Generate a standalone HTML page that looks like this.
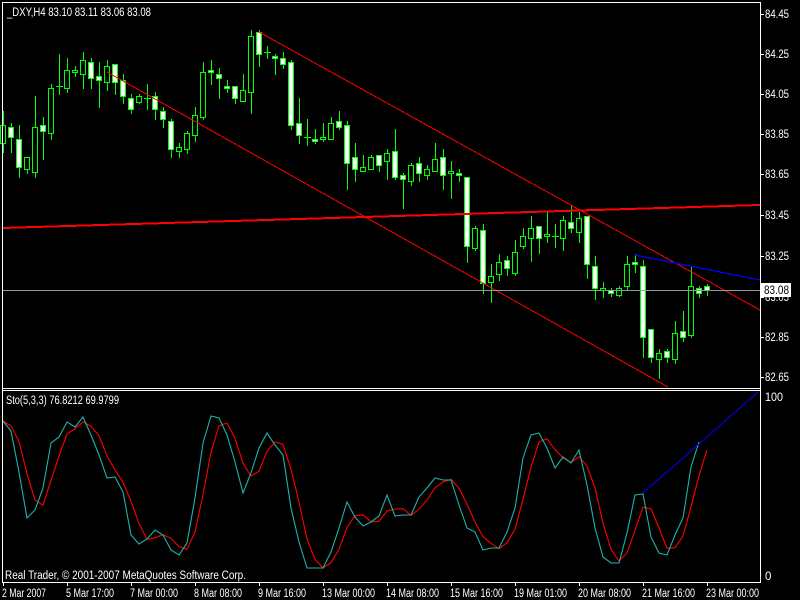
<!DOCTYPE html>
<html><head><meta charset="utf-8"><style>
html,body{margin:0;padding:0;background:#000;width:800px;height:600px;overflow:hidden}
svg{display:block}
text{font-family:"Liberation Sans",sans-serif;font-size:11.5px;fill:#fff}
</style></head><body>
<svg id="s" width="800" height="600" viewBox="0 0 800 600" xmlns="http://www.w3.org/2000/svg" shape-rendering="crispEdges">
<rect width="800" height="600" fill="#000"/>
<g id="c"></g>
<line x1="259" y1="32" x2="760" y2="310" stroke="#f00" stroke-width="1"/>
<line x1="107" y1="72" x2="668" y2="387" stroke="#f00" stroke-width="1"/>
<line x1="2" y1="228" x2="760" y2="205" stroke="#f00" stroke-width="2"/>
<line x1="635" y1="255" x2="760" y2="280" stroke="#00f" stroke-width="1.3"/>
<line x1="2" y1="290.5" x2="760" y2="290.5" stroke="#8c9aa8" stroke-width="1"/>
<line x1="2.5" y1="2" x2="2.5" y2="583" stroke="#fff"/>
<line x1="2" y1="2.5" x2="761" y2="2.5" stroke="#fff"/>
<line x1="760.5" y1="2" x2="760.5" y2="583" stroke="#fff"/>
<line x1="2" y1="388.5" x2="761" y2="388.5" stroke="#fff"/>
<line x1="2" y1="390.5" x2="761" y2="390.5" stroke="#fff"/>
<line x1="2" y1="582.5" x2="761" y2="582.5" stroke="#fff"/>
<g id="ax"></g>
<rect x="761" y="283" width="30" height="14" fill="#fff"/>
<text x="764" y="294" style="fill:#000" textLength="25" lengthAdjust="spacingAndGlyphs">83.08</text>
<text x="7" y="16" textLength="144" lengthAdjust="spacingAndGlyphs">_DXY,H4  83.10 83.11 83.06 83.08</text>
<text x="6" y="404" textLength="113" lengthAdjust="spacingAndGlyphs">Sto(5,3,3) 76.8212 69.9799</text>
<text x="5" y="579" textLength="241" lengthAdjust="spacingAndGlyphs">Real Trader, © 2001-2007 MetaQuotes Software Corp.</text>
<text x="765" y="401" textLength="18" lengthAdjust="spacingAndGlyphs">100</text>
<text x="765" y="580">0</text>
<line x1="643" y1="493" x2="758" y2="392" stroke="#00f" stroke-width="1"/>
</svg>
<script>
var NS="http://www.w3.org/2000/svg";
function el(p,t,a){var e=document.createElementNS(NS,t);for(var k in a)e.setAttribute(k,a[k]);p.appendChild(e);return e;}
var g=document.getElementById('c');
var C=[[111,152,125,143,0],[123,152,127,137,1],[125,177,139,167,1],[157,173,157,169,0],[96,177,127,172,0],[117,159,125,131,1],[84,139,88,133,0],[54,94,86,86,0],[58,92,70,88,0],[66,76,70,72,0],[52,88,60,74,0],[58,88,62,78,1],[62,107,76,80,1],[60,90,66,82,0],[64,94,64,82,1],[74,103,80,96,1],[94,113,98,109,1],[94,103,96,102,0],[84,109,98,98,0],[92,119,96,109,1],[107,127,111,119,1],[119,157,121,149,1],[143,157,147,151,0],[131,153,133,149,0],[107,141,115,135,0],[62,119,72,117,0],[60,84,70,72,1],[68,98,74,78,1],[80,92,86,88,1],[86,103,86,98,1],[74,101,90,101,0],[30,113,36,92,0],[30,66,32,54,1],[46,58,52,52,0],[54,74,56,58,1],[52,68,58,64,1],[60,129,62,125,1],[98,143,123,135,1],[119,145,137,137,0],[129,143,139,141,1],[123,141,137,139,0],[117,139,123,139,0],[111,129,121,127,1],[121,189,125,163,1],[143,181,157,169,1],[155,171,167,171,0],[155,169,157,169,0],[155,171,155,165,1],[149,179,153,161,0],[129,179,151,177,1],[173,208,175,179,1],[163,185,165,181,0],[157,181,163,173,1],[165,179,169,175,0],[143,171,159,171,0],[149,189,157,175,1],[161,198,171,173,0],[169,181,173,175,1],[177,262,177,246,1],[226,250,228,248,0],[224,293,230,283,1],[264,302,276,282,0],[254,280,262,274,0],[256,275,260,268,1],[240,275,252,273,0],[228,248,236,246,0],[216,261,228,238,0],[226,253,226,238,1],[212,242,234,236,0],[224,247,236,236,0],[216,250,220,238,0],[206,232,222,228,1],[212,242,218,232,0],[216,278,216,264,1],[256,299,266,288,1],[282,297,288,290,0],[288,296,290,293,1],[286,296,288,295,0],[256,290,264,286,0],[254,272,262,264,1],[260,357,266,337,1],[329,362,329,357,1],[349,378,353,359,0],[349,362,351,357,1],[321,363,333,359,0],[311,341,331,337,1],[266,337,286,335,0],[286,297,288,293,1],[284,295,286,290,1]];
C.forEach(function(c,i){var x=3+8*i;
 el(g,'line',{x1:x+.5,y1:c[0],x2:x+.5,y2:c[1]+1,stroke:'#0f0'});
 if(c[3]-c[2]<1){el(g,'line',{x1:x-3,y1:c[2]+.5,x2:x+4,y2:c[2]+.5,stroke:'#0f0'});}
 else el(g,'rect',{x:x-2.5,y:c[2]+.5,width:5,height:c[3]-c[2],fill:c[4]?'#fff':'#000',stroke:'#0f0'});
});
var ax=document.getElementById('ax');
var P=[['84.45',14],['84.25',54],['84.05',94],['83.85',134],['83.65',174],['83.45',215],['83.25',256],['83.05',297],['82.85',337],['82.65',377]];
P.forEach(function(p){el(ax,'line',{x1:761,y1:p[1]+.5,x2:764,y2:p[1]+.5,stroke:'#fff'});var t=el(ax,'text',{x:765,y:p[1]+4,textLength:24,lengthAdjust:'spacingAndGlyphs'});t.textContent=p[0];});
var T=[['2 Mar 2007',3,44],['5 Mar 17:00',67,48],['7 Mar 00:00',131,48],['8 Mar 08:00',195,48],['9 Mar 16:00',259,48],['13 Mar 00:00',323,53],['14 Mar 08:00',387,53],['15 Mar 16:00',451,53],['19 Mar 01:00',515,53],['20 Mar 08:00',579,53],['21 Mar 16:00',643,53],['23 Mar 00:00',707,53]];
T.forEach(function(p){el(ax,'line',{x1:p[1]+.5,y1:583,x2:p[1]+.5,y2:586,stroke:'#fff'});var t=el(ax,'text',{x:p[1]-1,y:597,textLength:p[2],lengthAdjust:'spacingAndGlyphs'});t.textContent=p[0];});
var K=[421,431,472,518,510,488,443,437,422,427,417,435,455,478,477,492,535,544,539,530,535,550,555,543,498,443,416,418,435,462,493,473,448,433,445,455,508,542,568,568,568,552,528,502,517,526,522,516,495,516,515,515,497,488,478,480,480,505,528,532,550,548,548,532,508,458,435,433,448,468,457,463,450,485,528,557,563,563,533,495,494,537,553,555,535,518,467,442];
var kp=[],dp=[];
K.forEach(function(v,i){var x=3+8*i;kp.push(x+','+v);
 var a=K.slice(Math.max(0,i-2),i+1);var m=a.reduce(function(s,q){return s+q},0)/a.length;dp.push(x+','+m.toFixed(1));});
dp.push('707,450');
el(ax,'polyline',{points:dp.join(' '),fill:'none',stroke:'#f00','shape-rendering':'auto','stroke-width':1.1});
el(ax,'polyline',{points:kp.join(' '),fill:'none',stroke:'#20b2aa','shape-rendering':'auto','stroke-width':1.1});
</script>
</body></html>
